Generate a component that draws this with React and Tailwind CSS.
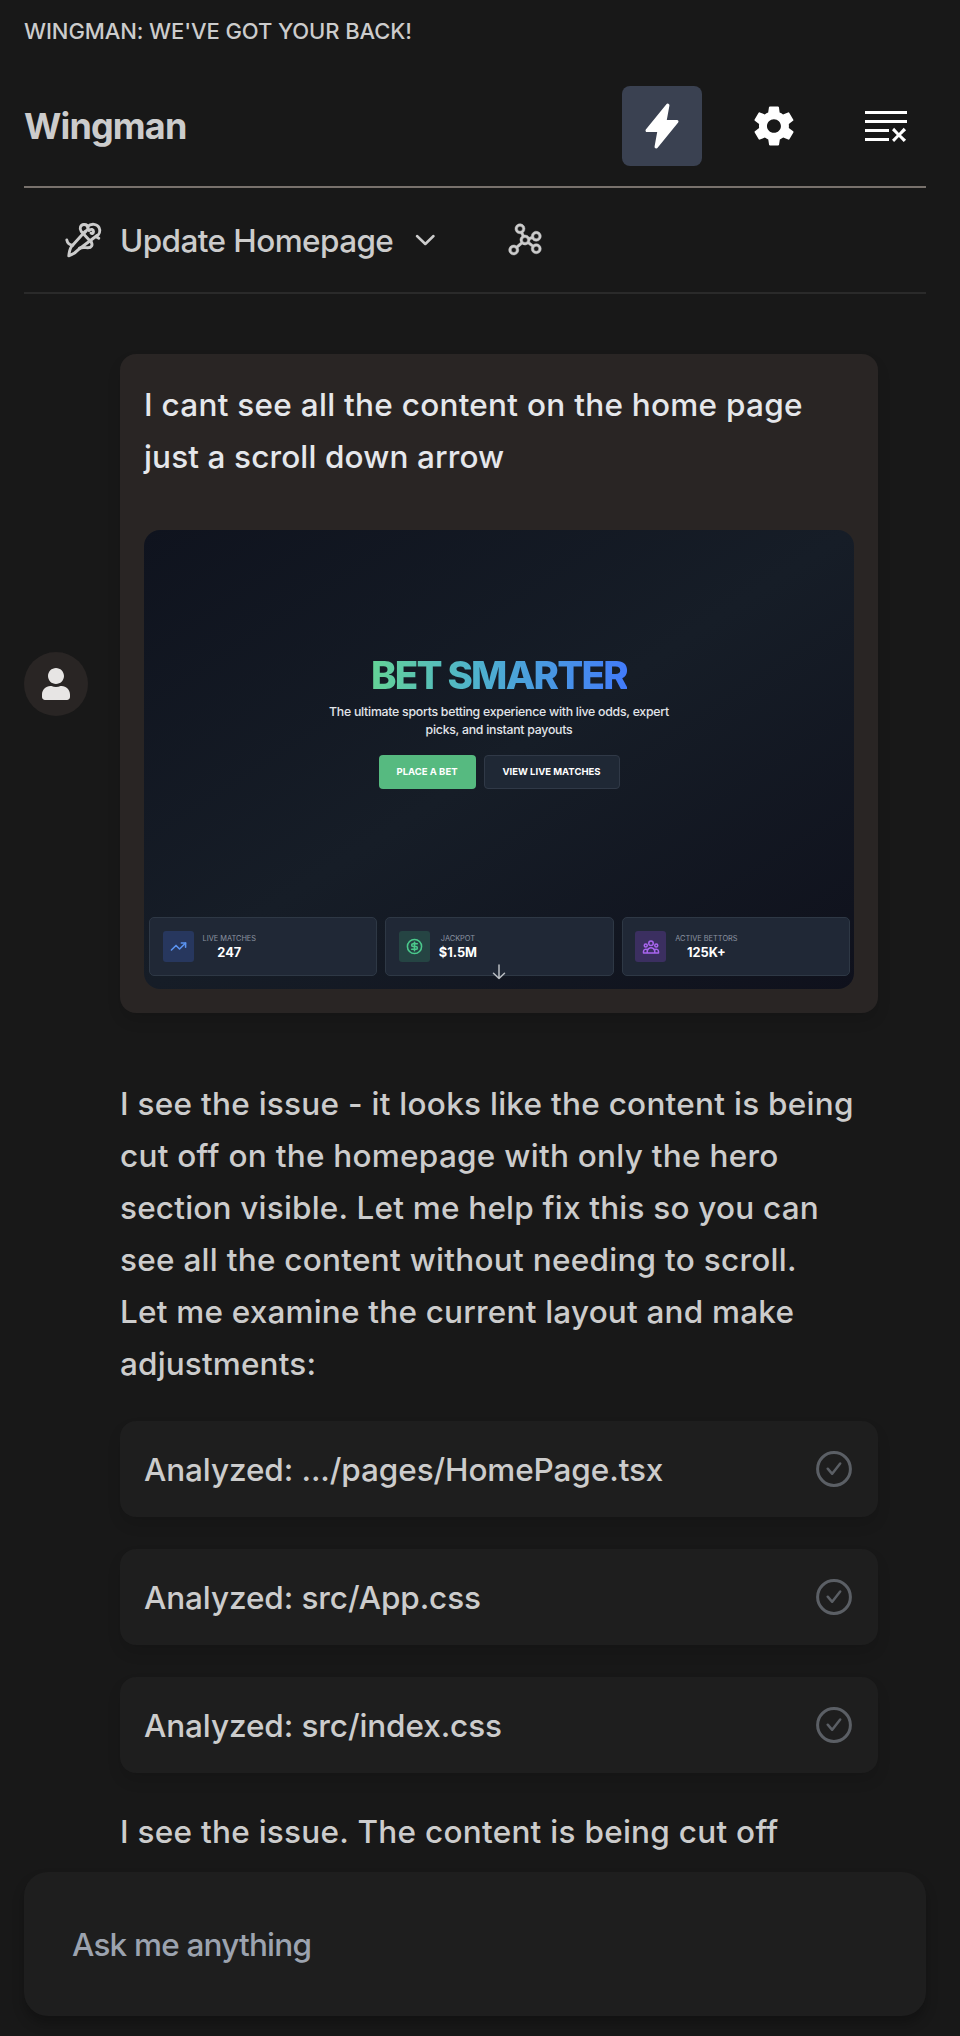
import { IoFlash } from "react-icons/io5";
import { IoMdSettings } from "react-icons/io";
import { VscClearAll } from "react-icons/vsc";
import { PiGraph } from "react-icons/pi";
import { FaUser } from "react-icons/fa";
import { HiOutlineUserGroup } from "react-icons/hi";
import { TrendingUp, CircleDollarSign } from "lucide-react";

function QuillIcon() {
  return (
    <svg width="36" height="36" viewBox="0 0 36 36" fill="none" stroke="currentColor" strokeWidth="2.900" strokeLinecap="round" strokeLinejoin="round" overflow="visible">
      <path d="M1.800 17c.6 3 2.700 5 6 5.200" />
      <path d="M20 8.500L6.500 23.500C4.700 26 4.200 29 3.800 32.800c4-1.200 7-3.300 9.700-6.300L32 12.500" />
      <path d="M26 19L16.300 8.500C14 5.500 15.500 1.800 18.800 1.500c2.500-.2 4.200 1.500 4.500 4l-3.500 4" />
      <path d="M22.500 3.500c4-3.500 9.500-2.500 11.500 1 1.700 3.200.5 7-3 9.300l2.800 1.500" />
      <path d="M24 7.500c2-2 4.500-1 4.500 1s-1.500 2.500-2.500 1.500" />
      <path d="M26 18.500c2.300 3.500.5 6.500-3.500 6.300-2.800-.2-5-.8-8 .4" />
    </svg>
  );
}

function CheckIcon() {
  return (
    <svg width="36" height="36" viewBox="0 0 36 36" fill="none" stroke="currentColor" strokeLinejoin="round" strokeLinecap="round">
      <circle cx="18" cy="18" r="16.400" strokeWidth="3" />
      <path d="M11.700 17.700l4.500 5.100 8-10.300" strokeWidth="2.500" />
    </svg>
  );
}

function FileCard({ label }) {
  return (
    <div className="flex h-24 items-center justify-between rounded-2xl bg-[#1e1e1e] pl-6 pr-[26px] shadow-[0_8px_14px_rgba(0,0,0,0.11)]">
      <span className="whitespace-nowrap pt-[2px] text-[31.500px] tracking-[-0.100px]">{label}</span>
      <span className="text-[#5b5f65]"><CheckIcon /></span>
    </div>
  );
}

function Stat({ icon, tone, label, value }) {
  return (
    <div className="flex h-[59px] flex-1 items-center gap-[9px] rounded-[5px] border border-[#2e3845] bg-[#202836] pl-[12.500px]">
      <div className={"flex size-[31px] items-center justify-center rounded-[3px] " + tone}>{icon}</div>
      <div className="flex flex-col items-center whitespace-nowrap pt-[2px]">
        <span className="text-[7.400px] font-normal leading-[11px] text-[#8b93a1]">{label}</span>
        <span className="text-[12.800px] font-bold leading-[18px] text-white">{value}</span>
      </div>
    </div>
  );
}

function Preview() {
  return (
    <div className="relative flex h-[459px] w-[710px] flex-col overflow-hidden rounded-2xl bg-[linear-gradient(147deg,#0f131e_0%,#161d27_50%,#0f111c_100%)]">
      <div className="flex flex-col items-center pt-[121px] text-white">
        <h2 className="whitespace-nowrap bg-[linear-gradient(90deg,#64d396,#4fb3cc_40%,#427bfa)] bg-clip-text text-[38.500px] font-extrabold leading-[48px] tracking-[-1.750px] text-transparent">
          BET SMARTER
        </h2>
        <p className="mt-[4px] whitespace-nowrap text-center text-[12.300px] leading-[17.500px] tracking-[-0.260px] text-[#e2e5ea]">
          The ultimate sports betting experience with live odds, expert
          <br />
          picks, and instant payouts
        </p>
        <div className="mt-[17px] flex gap-2 whitespace-nowrap text-[9.500px] font-bold">
          <div className="flex h-[34px] w-[97px] items-center justify-center rounded-[4px] bg-[#56ba80]">PLACE A BET</div>
          <div className="flex h-[34px] w-[136px] items-center justify-center rounded-[4px] border border-[#303947] bg-[#1f2835]">VIEW LIVE MATCHES</div>
        </div>
      </div>
      <div className="mt-auto mb-[13px] flex gap-2 pl-[5px] pr-[4px]">
        <Stat icon={<TrendingUp size={17} strokeWidth={2.2} />} tone="bg-[#27375e] text-[#5b93f0]" label="LIVE MATCHES" value="247" />
        <Stat icon={<CircleDollarSign size={17} strokeWidth={2.2} />} tone="bg-[#254443] text-[#4bc98c]" label="JACKPOT" value="$1.5M" />
        <Stat icon={<HiOutlineUserGroup size={18} />} tone="bg-[#3b2f60] text-[#a865ee]" label="ACTIVE BETTORS" value="125K+" />
      </div>
      <svg className="absolute left-[348px] top-[433px]" width="14" height="18" viewBox="0 0 14 18" fill="none" stroke="#b9bdc2" strokeWidth="1.500" strokeLinecap="round" strokeLinejoin="round">
        <path d="M7 2v13.500M1.500 10.200L7 15.500l5.500-5.300" />
      </svg>
    </div>
  );
}

export default function App() {
  return (
    <div className="flex h-[2036px] w-[960px] flex-col overflow-hidden bg-[#181818] px-6 font-['Inter',sans-serif] font-[450] text-[#cccccc]">
      <div className="flex h-[62px] shrink-0 items-center text-[22px] leading-none">
        <span className="whitespace-nowrap tracking-[-0.100px]">WINGMAN: WE'VE GOT YOUR BACK!</span>
      </div>
      <header className="mr-2.5 flex h-[126px] shrink-0 items-center justify-between border-b-2 border-[#78716c] pt-1">
        <h1 className="text-[36px] font-bold tracking-[-0.850px]">Wingman</h1>
        <div className="flex gap-8 text-white">
          <div className="flex size-20 items-center justify-center rounded-lg bg-[#3a4151]"><IoFlash size={48} /></div>
          <div className="flex size-20 items-center justify-center"><IoMdSettings size={48} /></div>
          <div className="flex size-20 items-center justify-center"><VscClearAll size={48} /></div>
        </div>
      </header>
      <nav className="mr-2.5 flex h-[106px] shrink-0 items-center border-b-2 border-[#2a2a2a] pl-[41px]">
        <span className="pt-[2px]"><QuillIcon /></span>
        <span className="ml-[19px] w-[273px] whitespace-nowrap pt-[2px] text-[31.500px] tracking-[-0.590px]">Update Homepage</span>
        <svg className="ml-[19px]" width="26" height="26" viewBox="0 0 26 26" fill="none" stroke="currentColor" strokeWidth="2.500" strokeLinecap="round" strokeLinejoin="round">
          <path d="M5 9l8.300 8L21.500 9" />
        </svg>
        <span className="ml-[67px]"><PiGraph size={40} stroke="currentColor" strokeWidth={3} /></span>
      </nav>

      <main className="flex h-[1578px] shrink-0 flex-col overflow-hidden pt-[60px]">
        <section className="flex shrink-0 items-center gap-8">
          <div className="flex size-16 items-center justify-center rounded-full bg-[#292524] text-[#e7e5e4]"><FaUser size={32} /></div>
          <div className="h-[659px] w-[758px] rounded-2xl bg-[#292524] p-6 shadow-[0_8px_14px_rgba(0,0,0,0.11)]">
            <p className="mb-[47px] mt-px whitespace-nowrap text-[31.500px] leading-[52px] tracking-[0.270px] text-[#e5e7eb]">
              I cant see all the content on the home page
              <br />
              <span className="tracking-[0.120px]">just a scroll down arrow</span>
            </p>
            <Preview />
          </div>
        </section>
        <section className="ml-24 mt-[65px] w-[758px] shrink-0">
          <p className="whitespace-nowrap text-[31.500px] leading-[52px] tracking-[0.270px]">
            I see the issue - it looks like the content is being<br />
            cut off on the homepage with only the hero<br />
            <span className="tracking-[0.200px]">section visible. Let me help fix this so you can</span><br />
            see all the content without needing to scroll.<br />
            <span className="tracking-[0.200px]">Let me examine the current layout and make</span><br />
            <span className="tracking-[0.150px]">adjustments:</span>
          </p>
          <div className="mt-[31px] flex flex-col gap-8">
            <FileCard label="Analyzed: .../pages/HomePage.tsx" />
            <FileCard label="Analyzed: src/App.css" />
            <FileCard label="Analyzed: src/index.css" />
          </div>
          <p className="mt-[33px] whitespace-nowrap text-[31.500px] leading-[52px] tracking-[0.270px]">I see the issue. The content is being cut off</p>
        </section>
      </main>

      <div className="mr-2.5 flex h-36 shrink-0 items-center rounded-3xl bg-[#1e1e1e] pl-12 pt-[2px] text-[31.500px] text-[#9ca3af] shadow-[0_8px_12px_rgba(0,0,0,0.25)]">
        <span className="whitespace-nowrap tracking-[-0.800px]">Ask me anything</span>
      </div>
    </div>
  );
}
